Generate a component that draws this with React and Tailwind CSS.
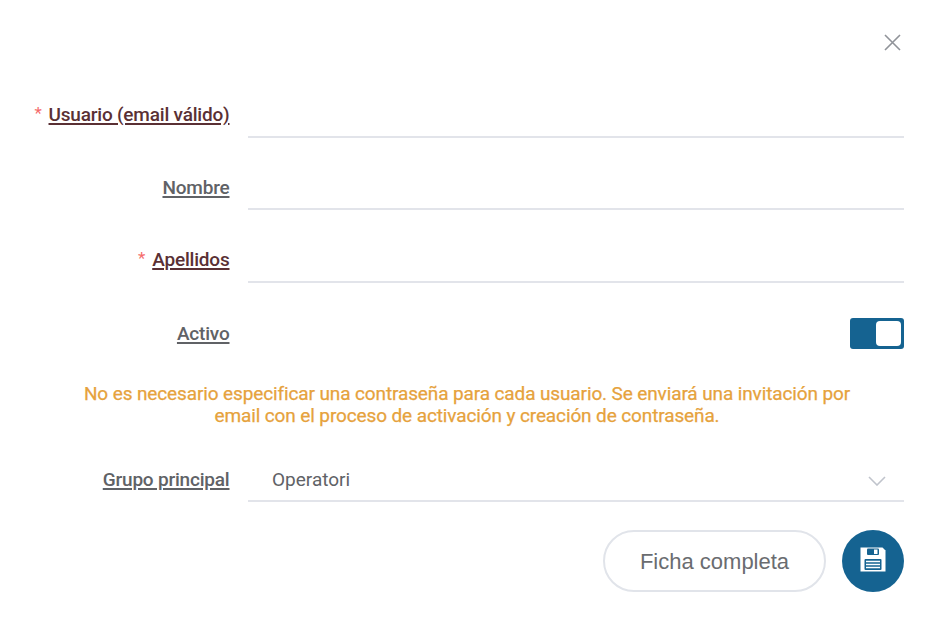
import React from "react";

function Row({ label, required, line, children }) {
  return (
    <div className="flex h-[46px] items-stretch">
      <div
        className={`flex w-[229.5px] shrink-0 items-center justify-end whitespace-nowrap text-[19px] font-medium tracking-[-0.2px] ${
          required ? "" : "pt-[2px]"
        }`}
      >
        {required && (
          <span className="mr-[7px] mb-[2px] text-[17px] font-normal text-[#f56c6c]">*</span>
        )}
        <span
          className={`underline decoration-[1.5px] underline-offset-[2px] ${
            required ? "text-[#5a3034]" : "text-[#606266]"
          }`}
        >
          {label}
        </span>
      </div>
      <div
        className={`ml-[18.5px] flex w-[656px] items-center ${
          line ? "border-b-2 border-[#e2e4ea]" : "justify-end"
        }`}
      >
        {children}
      </div>
    </div>
  );
}

function SaveIcon() {
  return (
    <svg width="26" height="25" viewBox="0 0 26 25" className="mb-[4px]">
      <path d="M0.5 0.5H22.5L25.5 3.5V24.5H0.5Z" fill="#fff" />
      <rect x="7" y="1.5" width="12" height="6.5" rx="1" fill="#156391" />
      <rect x="14" y="2.5" width="3.5" height="4.5" fill="#fff" />
      <rect x="4.5" y="12" width="17" height="11" rx="1" fill="#156391" />
      <path d="M6 14.5H20M6 17.5H20M6 20.5H20" stroke="#fff" strokeWidth="1.7" />
    </svg>
  );
}

export default function App() {
  return (
    <div className="h-[638px] w-[931px] overflow-hidden bg-white font-['Roboto',sans-serif] text-[#606266]">
      <div className="flex h-[92px] justify-end pr-[30.5px] pt-[34px]">
        <button className="h-[17px] w-[17px]" aria-label="Cerrar">
          <svg width="17" height="17" viewBox="0 0 17 17" className="block">
            <path d="M1 1L16 16M16 1L1 16" stroke="#909399" strokeWidth="1.6" />
          </svg>
        </button>
      </div>

      <div className="flex flex-col">
        <Row label="Usuario (email válido)" required line />
        <div className="mt-[26px]">
          <Row label="Nombre" line />
        </div>
        <div className="mt-[27px]">
          <Row label="Apellidos" required line />
        </div>
        <div className="mt-[27px]">
          <Row label="Activo">
            <div className="flex h-[31px] w-[54px] items-center justify-end rounded-[3px] bg-[#156391] pr-[3px]">
              <span className="h-[25px] w-[25px] rounded-[4px] bg-white" />
            </div>
          </Row>
        </div>
      </div>

      <p className="mt-[27px] h-[73px] pl-[3px] text-center text-[19px] leading-[22px] tracking-[-0.12px] text-[#e6a23c] [-webkit-text-stroke:0.25px_#e6a23c]">
        No es necesario especificar una contraseña para cada usuario. Se enviará una invitación por
        <br />
        email con el proceso de activación y creación de contraseña.
      </p>

      <Row label="Grupo principal" line>
        <span className="pl-[24px] pt-[4px] text-[19px]">Operatori</span>
        <svg width="18" height="10" viewBox="0 0 18 10" className="mt-[6px] mr-[18px] ml-auto">
          <path d="M1 1L9 9L17 1" fill="none" stroke="#c0c4cc" strokeWidth="1.6" />
        </svg>
      </Row>

      <div className="mt-[28px] flex justify-end gap-[16px] pr-[27px]">
        <button className="h-[62px] w-[223px] rounded-full border-2 border-[#e1e4ea] font-['Liberation_Sans',Arial,sans-serif] text-[22px] text-[#6a6c70]">
          Ficha completa
        </button>
        <button
          className="flex h-[62px] w-[62px] items-center justify-center rounded-full bg-[#156391]"
          aria-label="Guardar"
        >
          <SaveIcon />
        </button>
      </div>
    </div>
  );
}
